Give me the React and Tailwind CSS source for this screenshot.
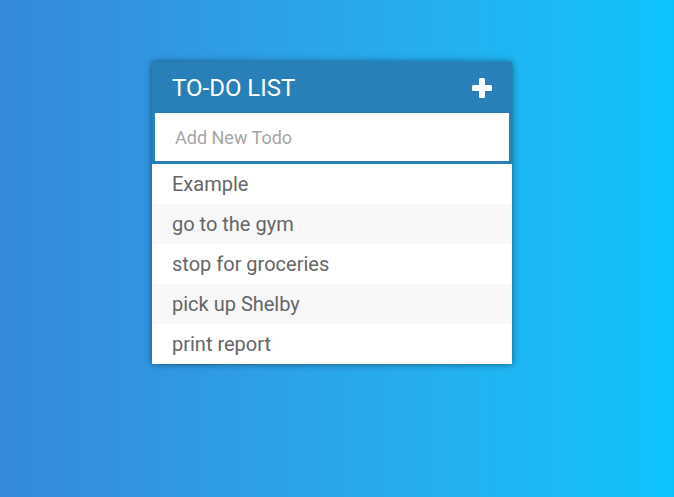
import { useState } from 'react'

const todos = ['Example', 'go to the gym', 'stop for groceries', 'pick up Shelby', 'print report']

function PlusIcon() {
  return (
    <svg width="20" height="20" viewBox="0 0 20 20" fill="white">
      <rect x="7" y="0" width="6" height="20" rx="1.5" />
      <rect x="0" y="7" width="20" height="6" rx="1.5" />
    </svg>
  )
}

export default function App() {
  const [text, setText] = useState('')

  return (
    <div
      className="min-h-[497px] w-full bg-gradient-to-r from-[#3589db] to-[#0bc4fc] pt-[62px]"
      style={{ fontFamily: 'Roboto, "Liberation Sans", sans-serif' }}
    >
      <div className="ml-[152px] w-[360px] bg-white shadow-[0_0_7px_rgba(0,0,0,0.5)]">
        <div className="flex h-[51px] items-center justify-between bg-[#2980b9] pl-5 pr-5">
          <h1 className="text-[24px] font-normal text-white">TO-DO LIST</h1>
          <PlusIcon />
        </div>
        <input
          autoFocus
          value={text}
          onChange={(e) => setText(e.target.value)}
          placeholder="Add New Todo"
          className="block h-[51px] w-full border-[3px] border-t-0 border-[#2980b9] bg-white px-5 pt-[1px] text-[18px] text-[#666] caret-[#2980b9] outline-none placeholder:text-[#a6a6a6]"
        />
        <ul>
          {todos.map((t, i) => (
            <li
              key={t}
              className={`flex h-10 items-center px-5 text-[20px] text-[#666] ${i % 2 ? 'bg-[#f7f7f7]' : 'bg-white'}`}
            >
              {t}
            </li>
          ))}
        </ul>
      </div>
    </div>
  )
}
